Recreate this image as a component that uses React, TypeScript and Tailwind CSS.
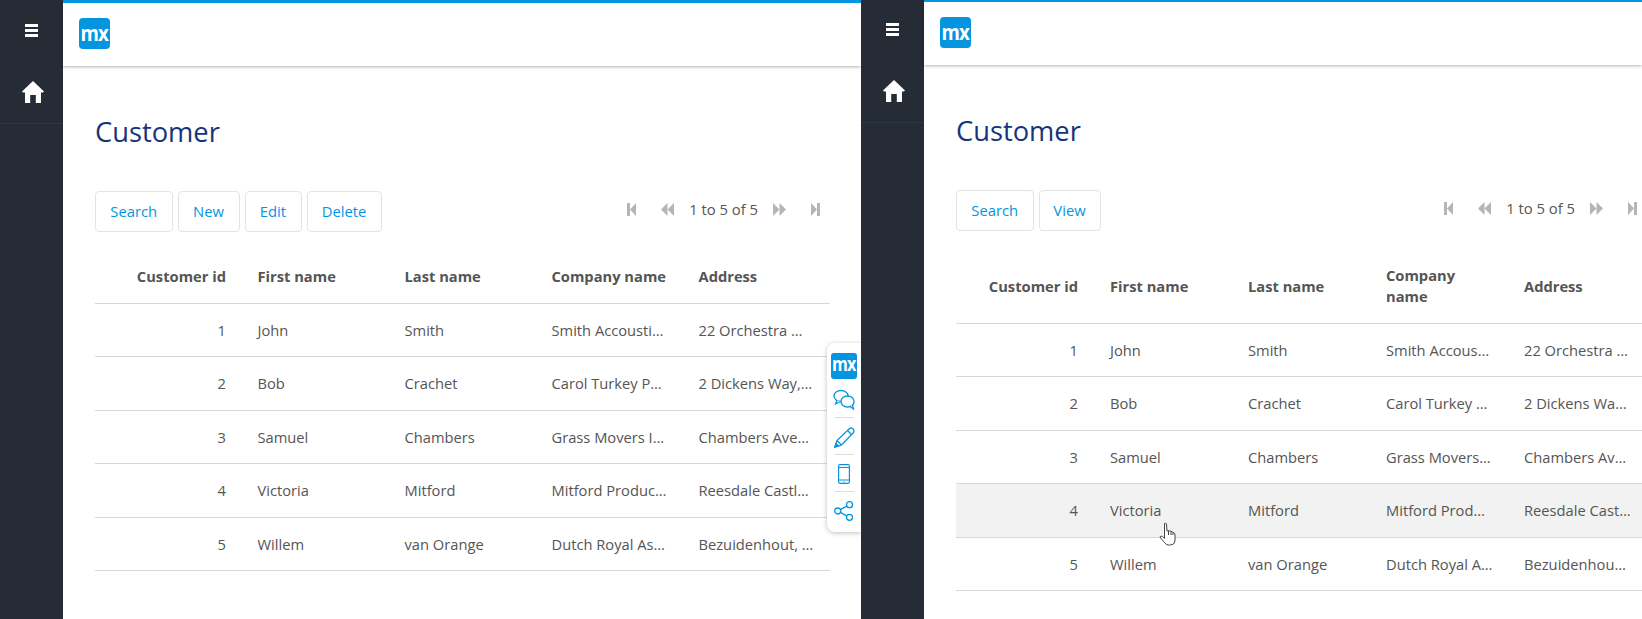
import React from "react";

const ROWS = [
  ["1", "John", "Smith", "Smith Accousting Ltd", "22 Orchestra Way, London"],
  ["2", "Bob", "Crachet", "Carol Turkey Products", "2 Dickens Way, Camden Town"],
  ["3", "Samuel", "Chambers", "Grass Movers Incorporated", "Chambers Avenue, Dublin"],
  ["4", "Victoria", "Mitford", "Mitford Productions", "Reesdale Castle, Gloucester"],
  ["5", "Willem", "van Orange", "Dutch Royal Association", "Bezuidenhout, Den Haag"],
];

function MxLogo({ className, textClass }: { className: string; textClass: string }) {
  return (
    <div className={`flex items-center justify-center bg-[#0595e0] text-white ${className}`}>
      <span className={`inline-block font-bold font-['Open_Sans',sans-serif] tracking-[-1px] leading-none ${textClass}`}>mx</span>
    </div>
  );
}

function Home() {
  return (
    <svg width="22" height="22" viewBox="0 0 22 22" fill="#fff">
      <path d="M11 0 L22 10.6 L21 11.6 H19 V22 H13.8 V14 H8.2 V22 H3 V11.6 H1 L0 10.6 Z" />
    </svg>
  );
}

function Pager() {
  const c = "#b5b5b5";
  return (
    <div className="mb-[4px] flex items-center text-[14.8px] text-[#555555]">
      <svg className="mr-[25px]" width="9" height="13" viewBox="0 0 9 13" fill={c}><rect x="0" y="0" width="3" height="13" /><path d="M3 6.5 L9 0 V13 Z" /></svg>
      <svg className="mr-[15px]" width="13" height="13" viewBox="0 0 13 13" fill={c}><path d="M0 6.5 L6.5 0 V13 Z" /><path d="M6.5 6.5 L13 0 V13 Z" /></svg>
      <span>1 to 5 of 5</span>
      <svg className="ml-[15px]" width="13" height="13" viewBox="0 0 13 13" fill={c}><path d="M13 6.5 L6.5 0 V13 Z" /><path d="M6.5 6.5 L0 0 V13 Z" /></svg>
      <svg className="ml-[25px]" width="9" height="13" viewBox="0 0 9 13" fill={c}><rect x="6" y="0" width="3" height="13" /><path d="M6 6.5 L0 0 V13 Z" /></svg>
    </div>
  );
}

function Btn({ label, widthClass }: { label: string; widthClass: string }) {
  return (
    <button className={`h-[41px] rounded-[4px] border-[1.5px] border-[#e4e4e6] bg-white text-center text-[14.8px] text-[#0595e0] ${widthClass}`}>
      {label}
    </button>
  );
}

function DataTable({ widthClass, colClass, hover, headClass, cellClass }: { widthClass: string; colClass: string; hover?: boolean; headClass: string; cellClass: string }) {
  const heads = ["Customer id", "First name", "Last name", "Company name", "Address"];
  return (
    <table className={`table-fixed border-collapse ${widthClass}`}>
      <colgroup>
        {heads.map((h) => (
          <col key={h} className={colClass} />
        ))}
      </colgroup>
      <thead>
        <tr className={`border-b border-[#d8d8d8] ${headClass}`}>
          {heads.map((h, i) => (
            <th key={h} className={`leading-[21px] font-bold text-[#555555] ${i === 0 ? "px-[16px] text-right" : `text-left ${cellClass}`}`}>
              {h}
            </th>
          ))}
        </tr>
      </thead>
      <tbody>
        {ROWS.map((r, ri) => (
          <tr key={r[0]} className={`h-[53.5px] border-b border-[#d8d8d8] ${hover && ri === 3 ? "bg-[#f2f2f2]" : ""}`}>
            {r.map((v, i) => (
              <td key={i} className={`truncate text-[#555555] ${i === 0 ? "px-[16px] text-right" : `text-left ${cellClass}`}`}>
                {v}
              </td>
            ))}
          </tr>
        ))}
      </tbody>
    </table>
  );
}

function Sidebar({ topClass }: { topClass: string }) {
  return (
    <aside className="flex w-[63px] shrink-0 flex-col bg-[#252c36]">
      <div className={`flex items-center justify-center ${topClass}`}>
        <div className="flex flex-col gap-[2px]">
          <div className="h-[3px] w-[13px] bg-white" />
          <div className="h-[3px] w-[13px] bg-white" />
          <div className="h-[3px] w-[13px] bg-white" />
        </div>
      </div>
      <div className="flex h-[64px] items-center justify-center border-b border-[#2e3743] pl-[2px]">
        <Home />
      </div>
    </aside>
  );
}

function TopBar({ shift }: { shift: boolean }) {
  return (
    <header className={`flex shrink-0 items-center bg-white pb-[2px] pl-[16px] shadow-[0_1px_3px_rgba(0,0,0,0.3)] ${shift ? "h-[65px] border-t-[2px] border-[#0595e0]" : "h-[66px] border-t-[3px] border-[#0595e0]"}`}>
      <MxLogo className="h-[31px] w-[31px] rounded-[4px]" textClass="text-[22px] scale-x-[0.85] -translate-y-[2px]" />
    </header>
  );
}

function Toolbox() {
  return (
    <div className="absolute right-0 top-[343px] flex h-[189px] w-[34px] flex-col items-center rounded-l-[8px] bg-white pt-[10px] shadow-[0_1px_5px_rgba(0,0,0,0.25)]">
      <MxLogo className="h-[26px] w-[26px] rounded-[3px]" textClass="text-[19px] scale-x-[0.85] -translate-y-[2px]" />
      <svg className="mt-[10px]" width="22" height="21" viewBox="0 0 22 21" fill="none" stroke="#0595e0" strokeWidth="1.3">
        <ellipse cx="8" cy="7" rx="7" ry="5.5" fill="#fff" />
        <path d="M4 11.5 L2.5 15 L7.5 12.5" fill="#fff" />
        <ellipse cx="14.5" cy="12.5" rx="6.5" ry="5.5" fill="#fff" />
        <path d="M17 17.5 L20.5 20 L19.5 16" fill="#fff" />
      </svg>
      <div className="mt-[7px] h-px w-[19px] bg-[#dddddd]" />
      <svg className="mt-[9px]" width="21" height="21" viewBox="0 0 21 21" fill="none" stroke="#0595e0" strokeWidth="1.3">
        <path d="M1 20 L3 13.5 L15.5 1.5 Q17 0.5 18.5 1.5 L19.5 2.5 Q20.5 4 19.5 5.5 L7.5 18 Z" />
        <path d="M3 13.5 L7.5 18 M13.5 3.5 L17.5 7.5" />
        <path d="M1 20 L2 16.5 L4.5 19 Z" fill="#0595e0" />
      </svg>
      <div className="mt-[6px] h-px w-[19px] bg-[#dddddd]" />
      <svg className="mt-[9px]" width="12" height="20" viewBox="0 0 12 20" fill="none" stroke="#0595e0" strokeWidth="1.2">
        <rect x="0.6" y="0.6" width="10.8" height="18.8" rx="1.5" />
        <path d="M0.6 3.5 H11.4 M0.6 16 H11.4 M5.5 17.8 H6.5" />
      </svg>
      <div className="mt-[7px] h-px w-[19px] bg-[#dddddd]" />
      <svg className="mt-[9px]" width="20" height="20" viewBox="0 0 20 20" fill="none" stroke="#0595e0" strokeWidth="1.3">
        <circle cx="3.7" cy="10" r="3" />
        <circle cx="15.5" cy="3.7" r="3" />
        <circle cx="15.5" cy="16.3" r="3" />
        <path d="M6.4 8.6 L12.8 5.1 M6.4 11.4 L12.8 14.9" />
      </svg>
    </div>
  );
}

function Cursor() {
  return (
    <svg className="absolute left-[298px] top-[522px]" width="17" height="24" viewBox="0 0 16 24" fill="#fff" stroke="#444" strokeWidth="1">
      <path d="M5 1.5 Q6.3 0.5 7 2 L7.5 9 L9 8.5 L10 9 L11.5 9 L12.5 10 L14 10.5 Q15.5 11 15.5 13 L15.5 19 Q15 23 11 23 L9 23 Q6.5 23 5 20.5 L1 16 Q0 14.5 1.5 14 L3 14.5 L5 16.5 Z" />
      <path d="M9 9 V13 M11.5 9.5 V13 M13.5 10.5 V13" fill="none" />
    </svg>
  );
}

export default function App() {
  return (
    <div className="flex h-[619px] w-[1642px] overflow-hidden bg-white font-['Open_Sans',sans-serif] text-[14.7px]">
      <div className="relative flex w-[861px] shrink-0 overflow-hidden">
        <Sidebar topClass="h-[60px]" />
        <main className="flex min-w-0 flex-1 flex-col">
          <TopBar shift={false} />
          <div className="flex-1 px-[32px]">
            <h1 className="mt-[46px] text-[27.3px] leading-[40px] text-[#17347b]">Customer</h1>
            <div className="mt-[39px] flex items-center justify-between pr-[9px]">
              <div className="flex gap-[5px]">
                <Btn label="Search" widthClass="w-[77.5px]" />
                <Btn label="New" widthClass="w-[62px]" />
                <Btn label="Edit" widthClass="w-[57px]" />
                <Btn label="Delete" widthClass="w-[75px]" />
              </div>
              <Pager />
            </div>
            <div className="mt-[18px]">
              <DataTable widthClass="w-[734px]" colClass="w-[147px]" headClass="h-[53px]" cellClass="pl-[15.5px] pr-[16px]" />
            </div>
          </div>
        </main>
        <Toolbox />
      </div>
      <div className="relative flex min-w-0 flex-1 overflow-hidden">
        <Sidebar topClass="h-[59px]" />
        <main className="flex min-w-0 flex-1 flex-col">
          <TopBar shift={true} />
          <div className="flex-1 px-[32px]">
            <h1 className="mt-[46px] text-[27.3px] leading-[40px] text-[#17347b]">Customer</h1>
            <div className="mt-[39px] flex w-[681px] items-center justify-between">
              <div className="flex gap-[5px]">
                <Btn label="Search" widthClass="w-[77.5px]" />
                <Btn label="View" widthClass="w-[62px]" />
              </div>
              <Pager />
            </div>
            <div className="mt-[19px] w-[690px]">
              <DataTable widthClass="w-[690px]" colClass="w-[138px]" headClass="h-[73px]" cellClass="pl-[16px] pr-[15px]" hover />
            </div>
          </div>
        </main>
        <Cursor />
      </div>
    </div>
  );
}
